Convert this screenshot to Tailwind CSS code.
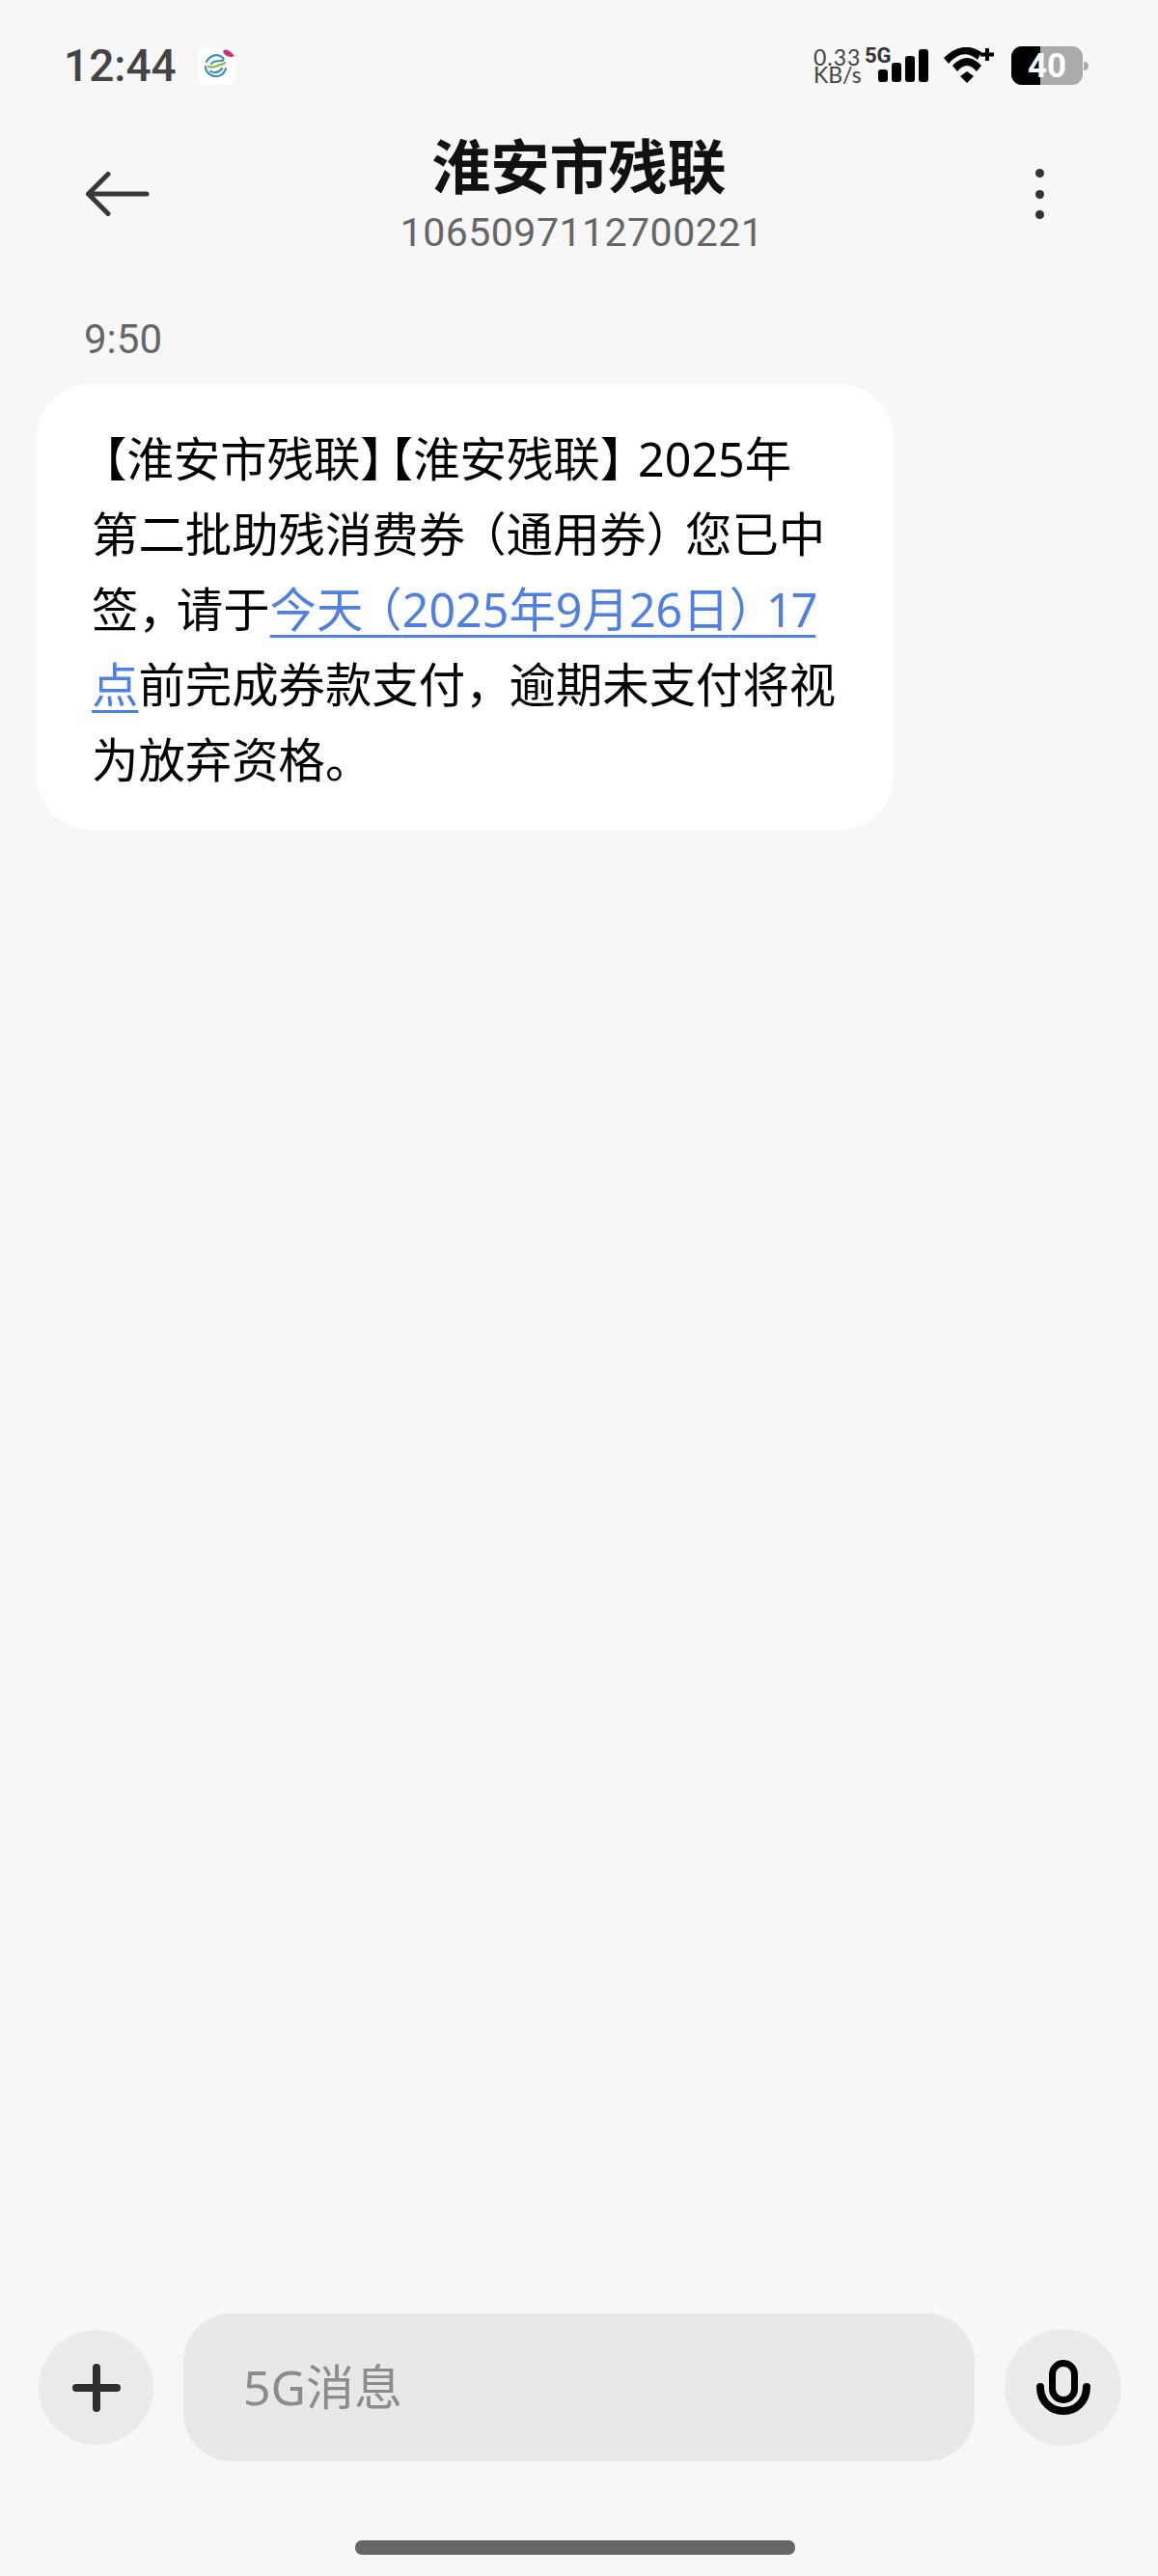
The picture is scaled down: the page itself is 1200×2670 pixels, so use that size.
<!DOCTYPE html>
<html lang="zh-CN">
<head>
  <meta charset="UTF-8" />
  <meta name="viewport" content="width=device-width, initial-scale=1.0"/>
  <title>淮安市残联</title>
  <script src="https://cdn.jsdelivr.net/npm/@tailwindcss/browser@4"></script>
</head>
<body class="bg-[#f7f7f7]">
  <div class="h-[2670px] w-[1200px] flex flex-col overflow-hidden font-['Noto_Sans','Noto_Sans_CJK_SC',sans-serif] [text-spacing-trim:space-all]">

    <!-- status bar -->
    <div class="h-[136px] shrink-0 flex items-center pl-[66px]">
      <span class="font-['Roboto',sans-serif] font-medium text-[46px] leading-none text-[#444]">12:44</span>
      <svg class="ml-[22px]" width="39" height="39" viewBox="0 0 39 39">
        <rect width="39" height="39" rx="8" fill="#fff"/>
        <g fill="none" stroke-width="2.2" stroke-linecap="round">
          <path d="M9 15c3-6 9-8 14-6s4 5 1 5-8 0-10 3" stroke="#3f8fc4"/>
          <path d="M8 20c0 7 7 11 13 10 4-1 7-4 8-8" stroke="#3f8fc4"/>
          <path d="M13 25c5 2 9 1 12-3" stroke="#3f8fc4"/>
          <path d="M11 20c5 2 9-1 12-2 3 0 4-1 5-2" stroke="#86b83f"/>
        </g>
        <path d="M26 4c3-3 7-1 12 5-4 2-10 1-12-5z" fill="#d12c78"/>
      </svg>
      <div class="ml-auto flex items-center pr-[72px]">
        <div class="font-['Lato',sans-serif] text-[23px] leading-[18px] text-[#444] w-[53px]">
          <div class="tracking-[1px]">0.33</div>
          <div>KB/s</div>
        </div>
        <div class="relative w-[66px] h-[36px]">
          <span class="absolute left-0 top-[-3px] font-['Roboto',sans-serif] font-bold text-[22px] leading-[22px] text-[#333]">5G</span>
          <svg class="absolute left-0 top-0" width="66" height="36" viewBox="0 0 66 36" fill="#000">
            <rect x="14" y="22" width="10" height="13" rx="3"/>
            <rect x="28" y="15" width="10" height="20" rx="3"/>
            <rect x="42" y="8" width="10" height="27" rx="3"/>
            <rect x="56" y="1" width="10" height="34" rx="3"/>
          </svg>
        </div>
        <svg class="ml-[16px]" width="52" height="38" viewBox="0 0 52 38" fill="#000">
          <path d="M0 11 Q20 -8 39 5 L35 13 Q20 0 5 17 Z"/>
          <path d="M9 19 Q24 3 39 19 L34 25 Q24 13 14 25 Z"/>
          <path d="M17 30 L24 25 L31 30 L24 37 Z"/>
          <path d="M38 7.500 H52 M45 1 V14" stroke="#000" stroke-width="4"/>
        </svg>
        <div class="ml-[18px] relative w-[74px] h-[40px] rounded-[11px] overflow-hidden bg-[#aaaaaa] flex items-center justify-center">
          <div class="absolute left-0 top-0 bottom-0 w-[30px] bg-black"></div>
          <span class="relative font-['Roboto',sans-serif] font-bold text-[35px] leading-none text-white">40</span>
        </div>
        <div class="ml-[1px] w-[5px] h-[9px] rounded-r-full bg-[#aaaaaa]"></div>
      </div>
    </div>

    <!-- header -->
    <div class="h-[140px] shrink-0 flex">
      <div class="w-[240px] pl-[89px] pt-[42px]">
        <svg width="66" height="46" viewBox="0 0 66 46" fill="none" stroke="#383838" stroke-width="5" stroke-linecap="round" stroke-linejoin="round">
          <path d="M23 2.500 L2.500 23 L23 43.500 M2.500 23 H63"/>
        </svg>
      </div>
      <div class="flex-1 text-center pt-[3px]">
        <div class="h-[68px] text-[61px] leading-[68px] font-bold text-[#111]">淮安市残联</div>
        <div class="h-[68px] pl-[6px] text-[41px] leading-[68px] text-[#666] font-['Roboto',sans-serif] tracking-[0.5px]">1065097112700221</div>
      </div>
      <div class="w-[240px] pl-[113px] pt-[39px] flex flex-col gap-[12.500px]">
        <div class="w-[9px] h-[9px] rounded-full bg-[#333]"></div>
        <div class="w-[9px] h-[9px] rounded-full bg-[#333]"></div>
        <div class="w-[9px] h-[9px] rounded-full bg-[#333]"></div>
      </div>
    </div>

    <!-- conversation -->
    <main class="flex-1 pt-[51px]">
      <div class="h-[50px] mb-[21px] pl-[87px] text-[42px] leading-[50px] text-[#666] font-['Roboto',sans-serif]">9:50</div>
      <div class="ml-[38px] w-[888px] h-[462px] bg-white rounded-[56px] pl-[57px] pt-[38px] text-[48.400px] leading-[78px] text-black whitespace-nowrap">
        <span class="ml-[-12px]">【</span>淮安市残联<span class="tracking-[-24px]">】</span><span class="ml-[-18px]">【</span>淮安残联<span class="tracking-[-9px]">】</span>2025年<br>
        第二批助残消费券<span class="ml-[-6px]">（</span>通用券<span class="tracking-[-8px]">）</span>您已中<br>
        签<span class="tracking-[-9px]">，</span>请于<a class="text-[#4f80e1] underline decoration-[3px] underline-offset-[8px]">今天<span class="ml-[-8px]">（</span>2025年9月26日<span class="tracking-[-10px]">）</span><span class="tracking-[-2px]">17</span><br>点</a>前完成券款支付<span class="tracking-[-3px]">，</span>逾期未支付将视<br>
        为放弃资格。
      </div>
    </main>

    <!-- composer -->
    <div class="shrink-0 flex items-center pl-[40px] pr-[38px] gap-[31px]">
      <div class="w-[119px] h-[119px] rounded-full bg-[#ebebeb] flex items-center justify-center shrink-0">
        <svg width="50" height="50" viewBox="0 0 50 50" stroke="#2f2f2f" stroke-width="8" stroke-linecap="round">
          <path d="M4 25 H46 M25 4 V46"/>
        </svg>
      </div>
      <div class="flex-1 h-[153px] rounded-[50px] bg-[#e8e8e8] flex items-center pl-[62px] text-[50px] text-[#8c8c8c]">5G消息</div>
      <div class="w-[121px] h-[121px] rounded-full bg-[#ebebeb] flex items-center justify-center shrink-0">
        <svg width="56" height="58" viewBox="0 0 56 58" fill="none" stroke="#000" stroke-linecap="round">
          <rect x="16.500" y="3.500" width="23" height="38" rx="11.500" stroke-width="7"/>
          <path d="M4 28 C4 43 15 53 28 53 S52 43 52 28" stroke-width="8"/>
        </svg>
      </div>
    </div>

    <!-- home indicator -->
    <div class="h-[119px] shrink-0 pt-[82px] flex justify-center">
      <div class="ml-[-8px] w-[456px] h-[15px] rounded-[7px] bg-[#666]"></div>
    </div>
  </div>
</body>
</html>
